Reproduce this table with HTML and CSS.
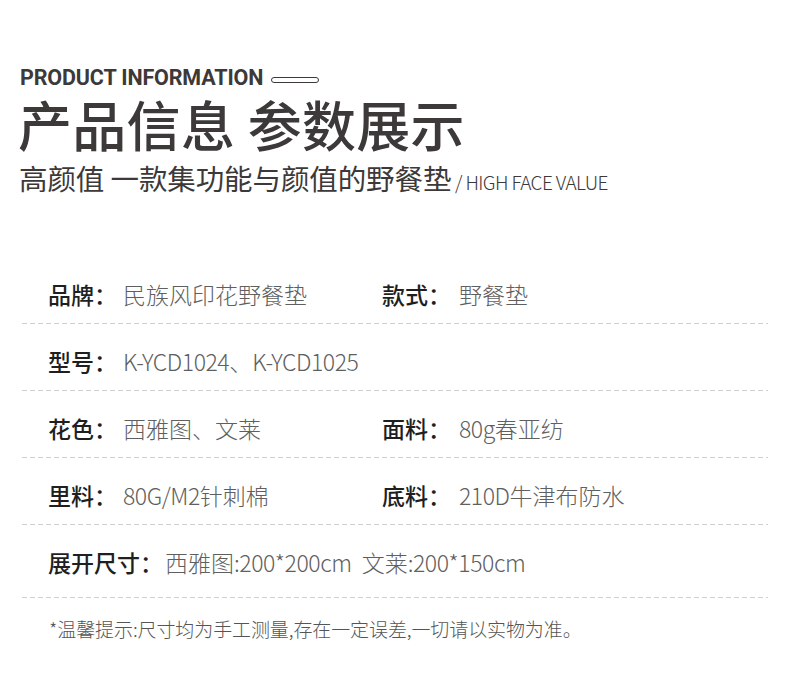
FILE: index.html
```html
<!DOCTYPE html>
<html lang="zh-CN">
<head>
<meta charset="utf-8">
<link rel="stylesheet" href="styles.css">
</head>
<body>
<div class="page">
  <header class="head">
    <div class="eyebrow">
      <span class="eyebrow-text">PRODUCT INFORMATION</span>
      <span class="pill"></span>
    </div>
    <h1 class="title">产品信息 参数展示</h1>
    <p class="subtitle">高颜值 一款集功能与颜值的野餐垫<span class="sub-en"> / HIGH FACE VALUE</span></p>
  </header>

  <section class="specs">
    <div class="row">
      <div class="cell left"><span class="label">品牌：</span><span class="value">民族风印花野餐垫</span></div>
      <div class="cell right"><span class="label">款式：</span><span class="value">野餐垫</span></div>
    </div>
    <div class="row">
      <div class="cell left"><span class="label">型号：</span><span class="value"><span class="num">K-YCD1024</span>、<span class="num">K-YCD1025</span></span></div>
    </div>
    <div class="row">
      <div class="cell left"><span class="label">花色：</span><span class="value">西雅图、文莱</span></div>
      <div class="cell right"><span class="label">面料：</span><span class="value"><span class="num">80g</span>春亚纺</span></div>
    </div>
    <div class="row">
      <div class="cell left"><span class="label">里料：</span><span class="value"><span class="num">80G/M2</span>针刺棉</span></div>
      <div class="cell right"><span class="label">底料：</span><span class="value"><span class="num">210D</span>牛津布防水</span></div>
    </div>
    <div class="row last">
      <div class="cell wide"><span class="label short">展开尺寸：</span><span class="value">西雅图<span class="num">:200*200cm</span>&nbsp;&nbsp;文莱<span class="num">:200*150cm</span></span></div>
    </div>
  </section>

  <p class="note">*温馨提示:尺寸均为手工测量,存在一定误差,一切请以实物为准。</p>
</div>
</body>
</html>
```

FILE: styles.css
```css
* { box-sizing: border-box; }
html, body { margin: 0; padding: 0; background: #fff; }
body {
  font-family: "Noto Sans CJK SC", "Noto Sans", sans-serif;
  color: #3c3938;
  width: 790px;
  height: 679px;
  overflow: hidden;
}
.page { padding: 63px 0 0 20px; }

.eyebrow { display: flex; align-items: center; height: 30px; }
.eyebrow-text {
  font-family: Roboto, "Liberation Sans", sans-serif;
  font-weight: 700;
  font-size: 21.5px;
  line-height: 26px;
  letter-spacing: -0.15px;
  color: #3c3938;
}
.pill {
  display: block;
  width: 48px;
  height: 6px;
  border: 1px solid #3c3938;
  border-radius: 3px;
  margin-left: 8px;
  margin-top: 3px;
}

.title {
  margin: 2px 0 0 -2px;
  font-size: 54px;
  line-height: 58px;
  font-weight: 500;
  color: #3c3938;
  letter-spacing: 0.3px;
}
.subtitle {
  margin: 7px 0 0 -1px;
  font-size: 28.5px;
  line-height: 36px;
  font-weight: 400;
  color: #3c3938;
  letter-spacing: -0.1px;
}
.sub-en {
  font-size: 19px;
  font-weight: 300;
  letter-spacing: -0.6px;
}

.specs { margin: 57px 22px 0 2px; }
.row {
  display: grid;
  grid-template-columns: 334px 1fr;
  padding: 22px 0 14px 26px;
  background-image: repeating-linear-gradient(90deg, #cfcfcf 0 5px, transparent 5px 8px);
  background-size: 100% 1px;
  background-position: left bottom;
  background-repeat: no-repeat;
  height: 67px;
}
.row.last { height: 73px; }
.cell { display: flex; align-items: center; height: 30px; white-space: nowrap; }
.wide { grid-column: 1 / span 2; }
.label {
  font-size: 23px;
  font-weight: 500;
  color: #1f1f1f;
  width: 75px;
}
.label.short { width: auto; margin-right: 2px; }
.right .label { width: 77px; }
.value {
  font-size: 23px;
  font-weight: 300;
  color: #5f5f5f;
}
.num { letter-spacing: -0.45px; }

.note {
  margin: 17px 0 0 29px;
  font-size: 19px;
  font-weight: 300;
  color: #555;
  letter-spacing: -0.1px;
}
```
